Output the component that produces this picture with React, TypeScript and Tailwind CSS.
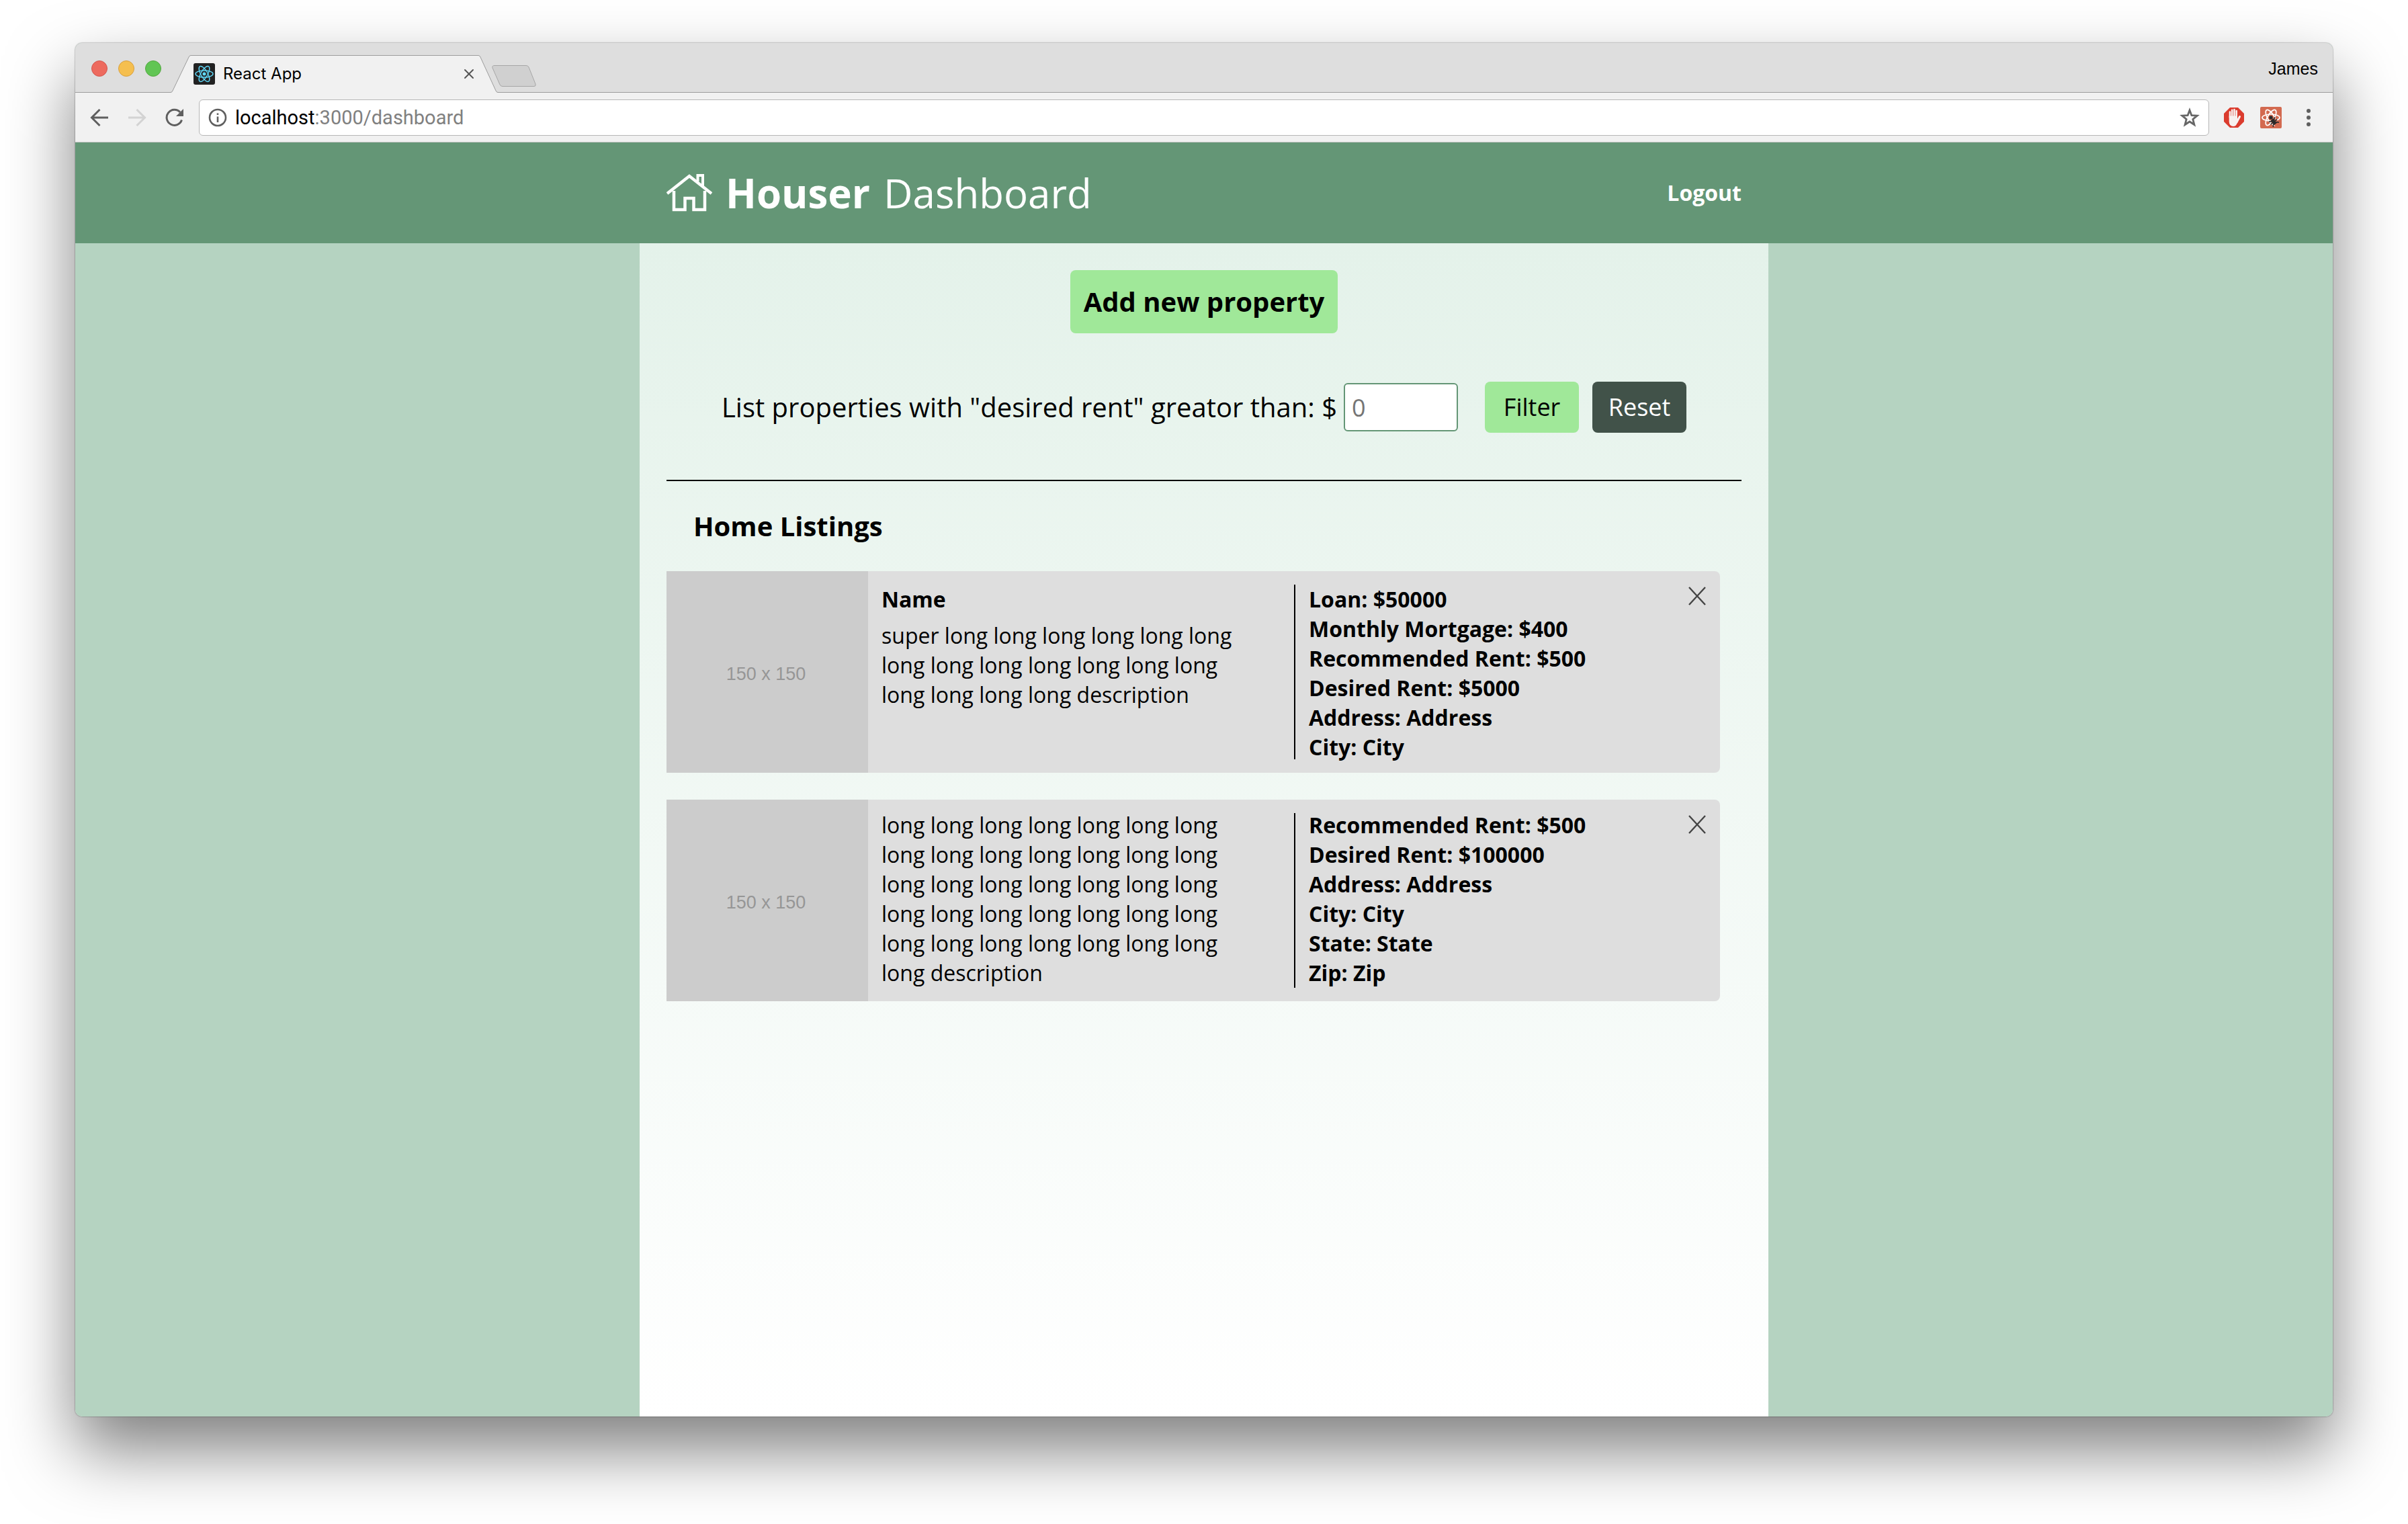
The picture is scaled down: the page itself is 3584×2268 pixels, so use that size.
import React from "react";
import { X } from "lucide-react";

const longs = (count: number) => Array(count).fill("long").join(" ");

const listings = [
  {
    id: 1,
    name: "Name",
    description: `super ${longs(17)} description`,
    align: "justify-start",
    facts: ["Loan: $50000", "Monthly Mortgage: $400", "Recommended Rent: $500", "Desired Rent: $5000", "Address: Address", "City: City"],
  },
  {
    id: 2,
    name: "",
    description: `${longs(36)} description`,
    align: "justify-end",
    facts: ["Recommended Rent: $500", "Desired Rent: $100000", "Address: Address", "City: City", "State: State", "Zip: Zip"],
  },
];

function Atom({ stroke }: { stroke: string }) {
  return (
    <g fill="none" stroke={stroke}>
      <ellipse cx="16" cy="16" rx="13" ry="5" />
      <ellipse cx="16" cy="16" rx="13" ry="5" transform="rotate(60 16 16)" />
      <ellipse cx="16" cy="16" rx="13" ry="5" transform="rotate(120 16 16)" />
    </g>
  );
}

function TabStrip() {
  return (
    <div className="relative flex h-[74px] items-end justify-between bg-[#dedede]">
      <div className="absolute inset-x-0 bottom-0 h-px bg-[#9c9c9c]" />
      <div className="relative flex items-end">
        <div className="mb-6 flex gap-4 pl-6">
          <button aria-label="Close window" className="size-6 rounded-full border border-[#d35750] bg-[#ed6a5e]" />
          <button aria-label="Minimise window" className="size-6 rounded-full border border-[#d8a040] bg-[#f5bf4f]" />
          <button aria-label="Zoom window" className="size-6 rounded-full border border-[#52a73f] bg-[#61c554]" />
        </div>
        <div className="relative h-14 w-[504px]">
          <svg viewBox="0 0 504 56" className="absolute inset-0 h-14 w-[504px]">
            <path d="M0 55.500H14Q16 55.500 17 53L41 3Q42 .500 44 .500H472Q474 .500 475 3L498 53Q499 55.500 501 55.500H504V56H0Z" fill="#f1f1f1" />
            <path d="M0 55.500H14Q16 55.500 17 53L41 3Q42 .500 44 .500H472Q474 .500 475 3L498 53Q499 55.500 501 55.500H504" fill="none" stroke="#9c9c9c" />
          </svg>
          <div className="relative flex h-full items-center gap-3 pr-[34px] pl-12">
            <svg viewBox="0 0 32 32" className="size-8">
              <rect width="32" height="32" rx="3" fill="#222" />
              <g strokeWidth="1.400">
                <Atom stroke="#61dafb" />
              </g>
              <circle cx="16" cy="16" r="2.500" fill="#61dafb" />
            </svg>
            <span className="flex-1 font-['Inter'] text-2xl">React App</span>
            <button aria-label="Close tab" className="text-[#555]">
              <X className="size-6" strokeWidth={2} />
            </button>
          </div>
        </div>
        <button aria-label="New tab" className="mb-2 -ml-3">
          <svg viewBox="0 0 68 34" className="h-[34px] w-[68px]">
            <path d="M4 1.500H51Q54 1.500 55 4L65 29Q66 32.500 63 32.500H16Q13 32.500 12 30L1 5Q0 1.500 4 1.500Z" fill="#d0d0d0" stroke="#a6a6a6" />
          </svg>
        </button>
      </div>
      <span className="self-center pt-1 pr-[22px] font-['Liberation_Sans'] text-[25px]">James</span>
    </div>
  );
}

function Toolbar() {
  return (
    <div className="flex h-[74px] items-center border-b border-[#c8c8c8] bg-[#f1f1f1] pl-[22px]">
      <div className="flex gap-7 pr-[22px]">
        <button aria-label="Back">
          <svg viewBox="0 0 28 28" className="size-7" fill="none" stroke="#5f5f5f" strokeWidth="3">
            <path d="M27 14H3M14.500 2L2.500 14l12 12" />
          </svg>
        </button>
        <button aria-label="Forward">
          <svg viewBox="0 0 28 28" className="size-7" fill="none" stroke="#d3d3d3" strokeWidth="3">
            <path d="M1 14h24M13.500 2l12 12-12 12" />
          </svg>
        </button>
        <button aria-label="Reload">
          <svg viewBox="0 0 28 28" className="size-7">
            <path d="M24.500 17.500A11.500 11.500 0 1 1 22 6" fill="none" stroke="#5f5f5f" strokeWidth="3" />
            <path d="M27 1v11H16z" fill="#5f5f5f" />
          </svg>
        </button>
      </div>
      <div className="flex h-[54px] flex-1 items-center gap-3 rounded-md border border-[#b6b6b6] bg-white px-[13px]">
        <svg viewBox="0 0 28 28" className="size-7" fill="none" stroke="#5f5f5f" strokeWidth="2.600">
          <circle cx="14" cy="14" r="12" />
          <path d="M14 12.500V21M14 7.500v2.600" />
        </svg>
        <a href="#dashboard" className="flex-1 font-['Roboto'] text-[29px] leading-8 text-[#808080]">
          <span className="text-black">localhost</span>:3000/dashboard
        </a>
        <button aria-label="Bookmark this page">
          <svg viewBox="0 0 30 30" className="size-[30px]" fill="none" stroke="#666" strokeWidth="2.800">
            <path d="M15 4l2.900 7.700 8.300.500-6.400 5.200 2.100 8.100-6.900-4.500-6.900 4.500 2.100-8.100-6.400-5.200 8.300-.500z" />
          </svg>
        </button>
      </div>
      <div className="flex items-center gap-6 pr-5 pl-[22px]">
        <button aria-label="Content blocker">
          <svg viewBox="0 0 30 30" className="size-[30px]">
            <path d="M9 0h12l9 9v12l-9 9H9l-9-9V9z" fill="#db3c2e" />
            <g stroke="#f7f1ef" strokeWidth="2.600" strokeLinecap="round" fill="none">
              <path d="M9 15V6.500M12.200 14V3.800M15.500 14V3M18.700 14V5" />
              <path d="M19 22l4.500-8.500" strokeWidth="3" />
            </g>
            <path d="M7.700 12.500H20V17l2.800-1.500-3.300 8Q18 28 14 28 8 28 7.700 21z" fill="#f7f1ef" />
          </svg>
        </button>
        <button aria-label="React developer tools">
          <svg viewBox="0 0 32 32" className="size-8">
            <rect width="32" height="32" rx="2" fill="#d36a50" />
            <g strokeWidth="1.700">
              <Atom stroke="#fff" />
            </g>
            <path d="M17 18l5 -1 5 6 0 5 -5 0 -6 -5z" fill="#d36a50" />
            <rect x="13.500" y="13.500" width="5" height="5" rx="1.500" fill="#2b2b2b" />
            <g transform="rotate(-38 20 22)" fill="none" stroke="#2b2b2b">
              <path d="M20 18v8.500" strokeWidth="5" />
              <path d="M14.500 17.500l2 2h7l2-2M14 22.500h12M14.500 28l2-2.500h7l2 2.500" strokeWidth="1.600" />
            </g>
          </svg>
        </button>
        <button aria-label="Menu" className="flex w-8 justify-center">
          <svg viewBox="0 0 8 28" className="h-7 w-2" fill="#5f5f5f">
            <circle cx="4" cy="4" r="3" />
            <circle cx="4" cy="14" r="3" />
            <circle cx="4" cy="24" r="3" />
          </svg>
        </button>
      </div>
    </div>
  );
}

function HouseIcon() {
  return (
    <svg viewBox="0 0 68 56" className="h-14 w-[68px]" fill="none" stroke="#fff" strokeWidth="4.500">
      <path d="M1 29L34 3l33 26" />
      <path d="M11 25v28h16.500V36h13v17H57V25" />
      <path d="M46.500 11V2H54v16" strokeWidth="4" />
    </svg>
  );
}

export default function App() {
  return (
    <div className="min-h-screen overflow-hidden bg-white px-28 pt-16 pb-40 font-['Open_Sans',sans-serif] text-black">
      <div className="rounded-[10px] shadow-[0_50px_100px_rgba(0,0,0,0.5),0_0_2px_rgba(0,0,0,0.6)]">
        <div className="flex min-h-[calc(100vh-224px)] flex-col overflow-hidden rounded-[10px] bg-[#b5d3c1]">
          <TabStrip />
          <Toolbar />
          <header className="flex justify-center bg-[#649676]">
            <div className="flex h-[150px] w-1/2 items-center justify-between px-10 text-white">
              <div className="flex items-center gap-5">
                <HouseIcon />
                <h1 className="flex gap-5 text-[60px] leading-[80px]">
                  <span className="font-bold">Houser</span> <span>Dashboard</span>
                </h1>
              </div>
              <a href="#logout" className="text-[32px] leading-[44px] font-bold">
                Logout
              </a>
            </div>
          </header>
          <main className="mx-auto flex w-1/2 flex-1 flex-col bg-linear-to-b from-[#e4f2ea] to-white px-10 pt-10">
            <button className="self-center rounded-lg bg-[#a0e899] p-5 text-[40px] leading-[54px] font-bold">Add new property</button>
            <form className="flex items-center justify-center border-b-2 border-black pt-[72px] pb-[70px]">
              <label htmlFor="rent" className="pr-2.5 text-[40px] leading-[54px]">
                List properties with "desired rent" greator than: $
              </label>
              <input id="rent" placeholder="0" className="mr-10 h-[72px] w-[170px] rounded-md border-2 border-[#649676] bg-white px-2.5 text-[36px] placeholder:text-[#757575]" />
              <button type="button" className="mr-5 h-[76px] w-[140px] rounded-lg bg-[#a0e899] text-[36px]">
                Filter
              </button>
              <button type="reset" className="h-[76px] w-[140px] rounded-lg bg-[#415249] text-[36px] text-white">
                Reset
              </button>
            </form>
            <h2 className="px-10 py-10 text-[40px] leading-[54px] font-bold">Home Listings</h2>
            <div className="flex flex-col gap-10 pr-8">
              {listings.map((home) => (
                <article key={home.id} className="flex h-[300px] rounded-r-lg bg-[#dedede]">
                  <div className="flex w-[300px] items-center justify-center bg-[#cccccc] pt-1.5 pr-1 font-['Liberation_Sans'] text-[27px] text-[#969696]">150 x 150</div>
                  <div className="flex flex-1 p-5">
                    <div className={`flex w-[614px] flex-col gap-2.5 pr-14 text-[32px] leading-[44px] ${home.align}`}>
                      {home.name && <h3 className="font-bold">{home.name}</h3>}
                      <p>{home.description}</p>
                    </div>
                    <ul className={`flex flex-1 flex-col border-l-2 border-black pl-5 text-[32px] leading-[44px] font-bold ${home.align}`}>
                      {home.facts.map((fact) => (
                        <li key={fact} className="shrink-0">{fact}</li>
                      ))}
                    </ul>
                    <button aria-label="Delete listing" className="self-start">
                      <svg viewBox="0 0 28 32" className="h-8 w-7" fill="none" stroke="#444" strokeWidth="2.400">
                        <path d="M2 4l24 26M26 4L2 30" />
                      </svg>
                    </button>
                  </div>
                </article>
              ))}
            </div>
          </main>
        </div>
      </div>
    </div>
  );
}
